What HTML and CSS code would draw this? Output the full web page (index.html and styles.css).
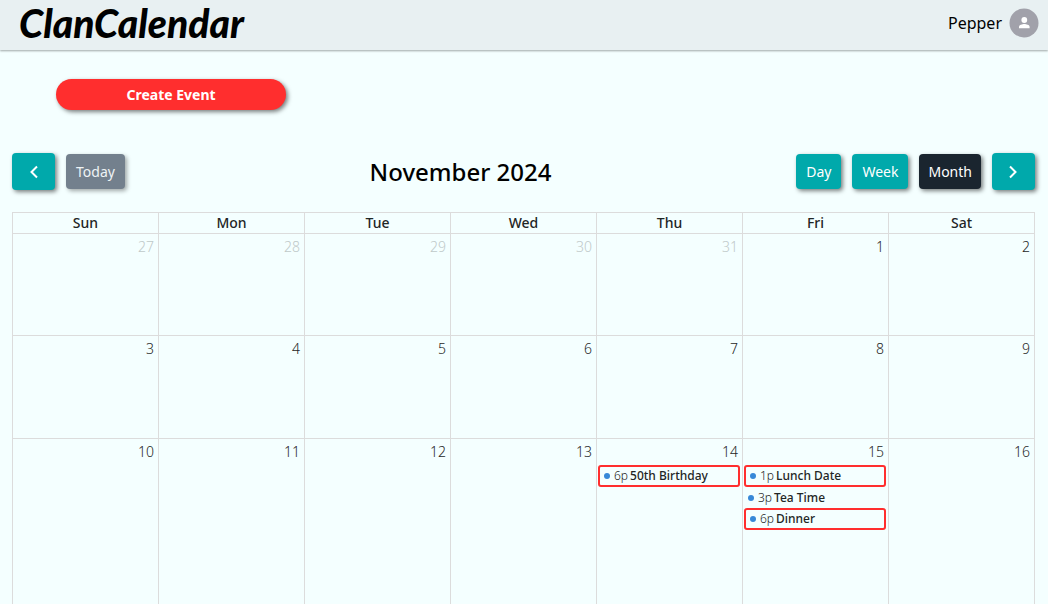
FILE: index.html
```html
<!DOCTYPE html>
<html lang="en">
<head>
<meta charset="utf-8">
<meta name="viewport" content="width=device-width, initial-scale=1">
<title>ClanCalendar</title>
<link rel="stylesheet" href="styles.css">
</head>
<body>
<div class="app">
  <header class="topbar">
    <h1 class="brand">ClanCalendar</h1>
    <div class="user">
      <span class="user-name">Pepper</span>
      <svg class="avatar" viewBox="0 0 30 30" role="img" aria-label="Profile">
        <circle cx="15" cy="15" r="14.5" fill="#a1a1aa"/>
        <circle cx="15.3" cy="12" r="2.9" fill="#fff"/>
        <path d="M10 20.2v-1.4c0-2 3.4-2.9 5.3-2.9s5.3.9 5.3 2.9v1.4z" fill="#fff"/>
      </svg>
    </div>
  </header>
  <main class="content">
    <button class="create" type="button">Create Event</button>
    <div class="toolbar">
      <div class="group">
        <button class="btn nav" type="button" aria-label="Previous month"><svg class="chevron" viewBox="0 0 16 16"><path d="M11 2.500 5.500 8l5.500 5.500"/></svg></button>
        <button class="btn today" type="button">Today</button>
      </div>
      <h2 class="title">November 2024</h2>
      <div class="group">
        <button class="btn" type="button">Day</button>
        <button class="btn" type="button">Week</button>
        <button class="btn active" type="button">Month</button>
        <button class="btn nav" type="button" aria-label="Next month"><svg class="chevron" viewBox="0 0 16 16"><path d="M5 2.500 10.500 8 5 13.500"/></svg></button>
      </div>
    </div>
    <table class="calendar">
      <thead>
        <tr><th>Sun</th><th>Mon</th><th>Tue</th><th>Wed</th><th>Thu</th><th>Fri</th><th>Sat</th></tr>
      </thead>
      <tbody>
        <tr>
          <td class="other"><div class="num">27</div></td>
          <td class="other"><div class="num">28</div></td>
          <td class="other"><div class="num">29</div></td>
          <td class="other"><div class="num">30</div></td>
          <td class="other"><div class="num">31</div></td>
          <td><div class="num">1</div></td>
          <td><div class="num">2</div></td>
        </tr>
        <tr class="second">
          <td><div class="num">3</div></td>
          <td><div class="num">4</div></td>
          <td><div class="num">5</div></td>
          <td><div class="num">6</div></td>
          <td><div class="num">7</div></td>
          <td><div class="num">8</div></td>
          <td><div class="num">9</div></td>
        </tr>
        <tr class="tall">
          <td><div class="num">10</div></td>
          <td><div class="num">11</div></td>
          <td><div class="num">12</div></td>
          <td><div class="num">13</div></td>
          <td><div class="num">14</div>
            <div class="event marked"><span class="dot"></span><span class="time">6p</span><span class="name">50th Birthday</span></div>
          </td>
          <td><div class="num">15</div>
            <div class="event marked"><span class="dot"></span><span class="time">1p</span><span class="name">Lunch Date</span></div>
            <div class="event"><span class="dot"></span><span class="time">3p</span><span class="name">Tea Time</span></div>
            <div class="event marked"><span class="dot"></span><span class="time">6p</span><span class="name">Dinner</span></div>
          </td>
          <td><div class="num">16</div></td>
        </tr>
      </tbody>
    </table>
  </main>
</div>
</body>
</html>
```
FILE: styles.css
```css
* { box-sizing: border-box; }

body {
  margin: 0;
  background: #f4ffff;
  color: #000;
  font-family: "Noto Sans", "Open Sans", sans-serif;
}

.app {
  height: 100vh;
  overflow: hidden;
}

.topbar {
  display: flex;
  align-items: center;
  justify-content: space-between;
  height: 50px;
  padding: 0 9px 4px 19px;
  background: #e8f0f2;
  box-shadow: 0 1px 2px rgba(0, 0, 0, 0.35);
}

.brand {
  margin: 0;
  font: italic 900 39px/44px Lato, sans-serif;
}

.user {
  display: flex;
  align-items: center;
  gap: 7px;
  font-size: 16px;
}

.avatar {
  width: 30px;
  height: 30px;
}

.content { padding: 29px 13px 0 12px; }

button {
  border: 0;
  color: #fff;
  font-family: inherit;
  cursor: pointer;
  box-shadow: 2px 2px 4px rgba(0, 0, 0, 0.5);
}

.create {
  display: block;
  width: 230px;
  height: 31px;
  margin-left: 44px;
  border-radius: 16px;
  background: #ff2e2e;
  font-size: 14px;
  font-weight: 700;
}

.toolbar {
  display: flex;
  align-items: center;
  justify-content: space-between;
  margin: 43px 0 22px;
}

.group {
  display: flex;
  align-items: center;
  gap: 11px;
}

.btn {
  height: 35px;
  padding: 0 10px;
  border-radius: 4px;
  background: #00a9ab;
  font-size: 14px;
}

.nav {
  display: flex;
  align-items: center;
  justify-content: center;
  width: 43px;
  height: 37px;
}

.today {
  background: #73808d;
  color: #eef3f5;
  box-shadow: 2px 2px 4px rgba(0, 0, 0, 0.35);
}

.active {
  padding: 0 9px;
  background: #1a252f;
}

.chevron {
  width: 16px;
  height: 16px;
  fill: none;
  stroke: #fff;
  stroke-width: 2;
}

.title {
  margin: 0;
  font-size: 24px;
  font-weight: 500;
  line-height: 32px;
}

.calendar {
  width: 100%;
  table-layout: fixed;
  border-collapse: collapse;
  color: #1f2626;
}

.calendar th,
.calendar td {
  border: 1px solid #dcdcdc;
  padding: 0;
  vertical-align: top;
}

.calendar th {
  height: 21px;
  font-size: 14px;
  font-weight: 500;
  line-height: 20px;
}

.calendar td {
  height: 102px;
  padding: 0 2px 0 1px;
}

.calendar .second td { height: 103px; }

.calendar .tall td { height: 180px; }

.num {
  padding: 3px 2px;
  font-size: 14px;
  font-weight: 300;
  line-height: 20px;
  text-align: right;
}

.other .num { color: #bfc9c9; }

.event {
  display: flex;
  align-items: center;
  height: 21px;
  padding: 0 4px;
  border-radius: 3px;
  font-size: 12px;
  line-height: 18px;
}

.marked {
  height: 22px;
  border: 2px solid #ff2e2e;
}

.dot {
  width: 6px;
  height: 6px;
  margin-right: 4px;
  border-radius: 50%;
  background: #3788d8;
}

.time {
  margin-right: 2px;
  font-weight: 300;
}

.name { font-weight: 500; }
```
